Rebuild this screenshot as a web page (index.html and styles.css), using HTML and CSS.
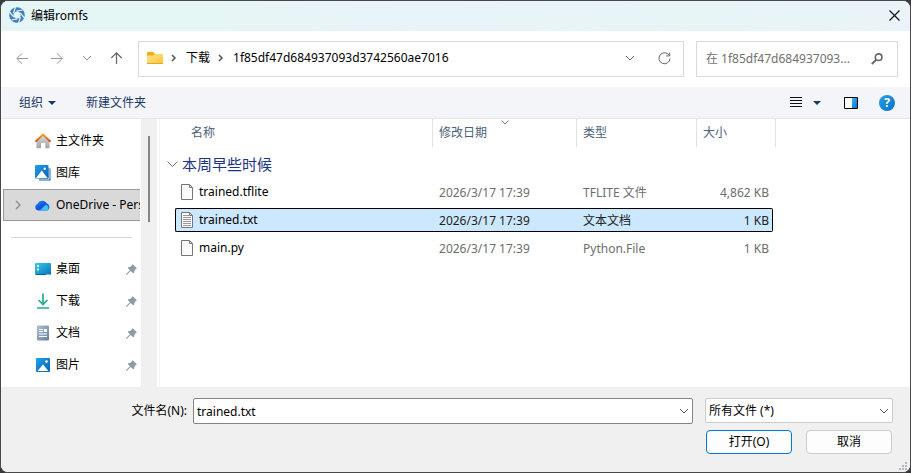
FILE: index.html
```html
<!DOCTYPE html>
<html lang="zh-CN">
<head>
<meta charset="utf-8">
<title>编辑romfs</title>
<link rel="stylesheet" href="styles.css">
</head>
<body>
<svg class="defs" width="0" height="0" aria-hidden="true">
  <defs>
    <linearGradient id="folder" x1="0" y1="0" x2="1" y2="1"><stop offset="0" stop-color="#ffe48f"/><stop offset="1" stop-color="#fcc53a"/></linearGradient>
    <linearGradient id="blue" x1="0" y1="0" x2="1" y2="1"><stop offset="0" stop-color="#1fa0e8"/><stop offset="1" stop-color="#0a62b8"/></linearGradient>
    <linearGradient id="pane" x1="0" y1="0" x2="1" y2="1"><stop offset="0" stop-color="#35b4f2"/><stop offset="1" stop-color="#0a78d0"/></linearGradient>
    <linearGradient id="desk" x1="0" y1="0" x2="1" y2="1"><stop offset="0" stop-color="#2fd0de"/><stop offset="1" stop-color="#0a6fc6"/></linearGradient>
    <linearGradient id="cloud" x1="0" y1="0" x2="1" y2="1"><stop offset="0" stop-color="#1aa0f4"/><stop offset=".5" stop-color="#1450dc"/><stop offset="1" stop-color="#1a78ee"/></linearGradient>
    <linearGradient id="house" x1="0" y1="0" x2="0" y2="1"><stop offset="0" stop-color="#dedede"/><stop offset="1" stop-color="#a2a2a2"/></linearGradient>
    <linearGradient id="roof" x1="0" y1="0" x2="0" y2="1"><stop offset="0" stop-color="#f5a21c"/><stop offset="1" stop-color="#d9502a"/></linearGradient>
    <linearGradient id="green" x1="0" y1="0" x2="0" y2="1"><stop offset="0" stop-color="#35c98e"/><stop offset="1" stop-color="#0f9a92"/></linearGradient>
    <linearGradient id="doc" x1="0" y1="0" x2="1" y2="1"><stop offset="0" stop-color="#adc0d6"/><stop offset="1" stop-color="#647f9f"/></linearGradient>
    <symbol id="chev-down" viewBox="0 0 10 6"><path d="M1 1l4 4 4-4" fill="none" stroke="currentColor"/></symbol>
    <symbol id="chev-right" viewBox="0 0 6 8"><path d="M1 1l3 3-3 3" fill="none" stroke="currentColor" stroke-width="1.5"/></symbol>
    <symbol id="pin" viewBox="0 0 11 11"><path d="M6.5 0L11 4.5 9.8 5 8.4 6.6 8.2 8.6 7.2 9.3 4.6 6.9 1 10.8 0 11 .2 10 3.9 6.2 1.8 3.9 2.5 2.9 4.5 2.7 6.1 1.2z" fill="#8f999f"/></symbol>
    <symbol id="page" viewBox="0 0 13 16"><path d="M.5.5h8l3 3v12H.5z" fill="#fbfbfb" stroke="#767676"/><path d="M8.5.5v3h3" fill="none" stroke="#767676"/></symbol>
  </defs>
</svg>
<main class="window">
  <header class="titlebar">
    <svg class="app-icon" width="16" height="16" viewBox="0 0 16 16"><circle cx="8" cy="8" r="5.7" fill="none" stroke="#3b7fc4" stroke-width="4.2"/><g stroke="#e6f5f6" stroke-width="1.200"><path d="M4.500 6L6.500 0M7.500 4.200L13.500 3M11.200 5.800L15.500 11M11.500 10L9.500 16M8.500 11.800L2.500 13M4.800 10.200L.500 5"/></g></svg>
    <h1 class="title">编辑romfs</h1>
    <button class="icon-btn close" aria-label="关闭"><svg width="11" height="11" viewBox="0 0 11 11"><path d="M.5.5l10 10M10.5.5l-10 10" stroke="#111" stroke-width="1.2"/></svg></button>
  </header>
  <nav class="navbar">
    <div class="nav-buttons">
      <button class="icon-btn faded" aria-label="后退"><svg width="12" height="12" viewBox="0 0 12 12"><path d="M12 6.500H1M6 1.300L.8 6.500 6 11.700" fill="none" stroke="currentColor"/></svg></button>
      <button class="icon-btn faded" aria-label="前进"><svg width="12" height="12" viewBox="0 0 12 12"><path d="M0 6.500h11M6 1.300l5.200 5.200L6 11.700" fill="none" stroke="currentColor"/></svg></button>
      <button class="icon-btn faded small" aria-label="最近浏览的位置"><svg width="10" height="6"><use href="#chev-down"/></svg></button>
      <button class="icon-btn" aria-label="上移"><svg width="12" height="12" viewBox="0 0 12 12"><path d="M5.500 12V1M.3 6L5.500.8 10.700 6" fill="none" stroke="currentColor" stroke-width="1.2"/></svg></button>
    </div>
    <div class="address">
      <svg width="16" height="14" viewBox="0 0 16 14"><path d="M0 2a1 1 0 0 1 1-1h5l2 2h7a1 1 0 0 1 1 1v4H0z" fill="#f5ac0f"/><path d="M0 4.5h6.2L8 3h7.2a.8.8 0 0 1 .8.8V12a1 1 0 0 1-1 1H1a1 1 0 0 1-1-1z" fill="url(#folder)"/><path d="M0 12.5h16" stroke="#e9a51c"/></svg>
      <svg class="crumb-sep" width="6" height="8"><use href="#chev-right"/></svg>
      <a href="#" class="crumb">下载</a>
      <svg class="crumb-sep" width="6" height="8"><use href="#chev-right"/></svg>
      <a href="#" class="crumb">1f85df47d684937093d3742560ae7016</a>
      <button class="icon-btn history" aria-label="以前的位置"><svg width="10" height="6"><use href="#chev-down"/></svg></button>
      <button class="icon-btn refresh" aria-label="刷新"><svg width="13" height="13" viewBox="0 0 13 13"><path d="M11.2 3.4A5.5 5.5 0 1 0 12 6.5M11.7.5v3.4H8.2" fill="none" stroke="currentColor"/></svg></button>
    </div>
    <div class="search">
      <input type="text" aria-label="搜索" placeholder="在 1f85df47d684937093...">
      <svg width="12" height="12" viewBox="0 0 12 12"><circle cx="7.6" cy="4.2" r="3.3" fill="none" stroke="#666" stroke-width="1.6"/><path d="M5.3 6.6L.8 11" stroke="#666" stroke-width="2"/></svg>
    </div>
  </nav>
  <div class="commandbar">
    <button class="command">组织<svg width="8" height="4" viewBox="0 0 8 4"><path d="M0 0h8L4 4z" fill="currentColor"/></svg></button>
    <button class="command">新建文件夹</button>
    <div class="view-tools">
      <button class="icon-btn" aria-label="更改视图"><svg width="12" height="11" viewBox="0 0 12 11"><path d="M0 .5h12M0 3.5h12M0 6.5h12M0 9.5h12" stroke="#111"/></svg></button>
      <button class="icon-btn view-arrow" aria-label="更多选项"><svg width="8" height="4" viewBox="0 0 8 4"><path d="M0 0h8L4 4z" fill="#1c3768"/></svg></button>
      <button class="icon-btn preview" aria-label="显示预览窗格"><svg width="14" height="12" viewBox="0 0 14 12"><path d="M.5.5h13v11H.5z" fill="#fff" stroke="#000"/><path d="M8 1h5v10H8z" fill="url(#pane)"/></svg></button>
      <button class="help" aria-label="帮助">?</button>
    </div>
  </div>
  <div class="content">
    <nav class="sidebar">
      <ul class="places">
        <li><a class="place" href="#"><svg width="16" height="16" viewBox="0 0 16 16"><path d="M1.5 7L8 1.5 14.500 7v8.200h-4.200V10H6v5.200H1.500z" fill="url(#house)"/><path d="M1 8.200L8 1.500l7 6.700" fill="none" stroke="url(#roof)" stroke-width="1.900" stroke-linecap="round"/></svg>主文件夹</a></li>
        <li><a class="place" href="#"><svg width="16" height="16" viewBox="0 0 16 16"><path d="M4 3h10.500a1 1 0 0 1 1 1v11.500H4z" fill="#1766ad"/><path d="M14 1v13H2" fill="none" stroke="#fff"/><rect width="13.500" height="13.500" rx="1" fill="url(#blue)"/><path d="M1 13l5.800-7.500L12.500 13z" fill="#fff"/><circle cx="9.700" cy="3.800" r="1.200" fill="#fff"/></svg>图库</a></li>
        <li><a class="place selected" href="#"><svg class="expander" width="6" height="10" viewBox="0 0 6 10"><path d="M1 1l4 4-4 4" fill="none" stroke="#888" stroke-width="1.300"/></svg><svg width="16" height="11" viewBox="0 0 16 11"><path d="M3.500 10.500A3.500 3.500 0 0 1 2.600 3.700 5 5 0 0 1 11.500 3.200 4 4 0 0 1 12.500 10.500z" fill="url(#cloud)"/><path d="M5 10.500l5.600-5.700A3.500 3.500 0 0 1 12.500 10.500z" fill="#42c0f7"/></svg>OneDrive - Personal</a></li>
      </ul>
      <hr class="divider">
      <ul class="places">
        <li><a class="place" href="#"><svg width="16" height="12" viewBox="0 0 16 12"><rect width="16" height="12" rx="1" fill="url(#desk)"/><path d="M2 2h2v2H2zM2 5.500h2v2H2z" fill="#fff"/><path d="M1 11.500h10" stroke="#0b5c99"/><path d="M11.500 11.500h3" stroke="#fff" stroke-dasharray="1 1"/></svg>桌面<svg class="pin" width="11" height="11"><use href="#pin"/></svg></a></li>
        <li><a class="place" href="#"><svg width="16" height="16" viewBox="0 0 16 16"><path d="M8 .500v10.500M3.500 7L8 11.500 12.500 7M2 15h12" fill="none" stroke="#1fae8e" stroke-width="1.700"/></svg>下载<svg class="pin" width="11" height="11"><use href="#pin"/></svg></a></li>
        <li><a class="place" href="#"><svg width="16" height="16" viewBox="0 0 16 16"><rect x="2" y=".500" width="12" height="15" rx="1" fill="url(#doc)"/><path d="M4 4.500h4M4 6.500h4M4 9h8M4 11.500h8" stroke="#fff" stroke-width="1"/><path d="M9 4h3v3H9z" fill="#fff"/></svg>文档<svg class="pin" width="11" height="11"><use href="#pin"/></svg></a></li>
        <li><a class="place" href="#"><svg width="16" height="16" viewBox="0 0 16 16"><rect x="1" y="1" width="14" height="14" rx="1" fill="url(#blue)"/><path d="M2.500 14L8 7.500l5.500 6.500z" fill="#fff"/><circle cx="11.500" cy="4.500" r="1.300" fill="#fff"/></svg>图片<svg class="pin" width="11" height="11"><use href="#pin"/></svg></a></li>
      </ul>
    </nav>
    <div class="scrollbar"><div class="thumb"></div></div>
    <section class="files">
      <table>
        <colgroup><col class="c-gutter"><col class="c-name"><col class="c-date"><col class="c-type"><col class="c-size"><col class="c-end"></colgroup>
        <thead><tr><th colspan="2" class="h-name">名称</th><th class="sorted">修改日期<svg class="sort" width="8" height="5" viewBox="0 0 8 5"><path d="M.500.500L4 4 7.500.500" fill="none" stroke="#777"/></svg></th><th>类型</th><th colspan="2">大小</th></tr></thead>
        <tbody>
          <tr class="group"><td colspan="6"><button class="group-btn"><svg width="11" height="6" viewBox="0 0 11 6"><path d="M.500.500l5 5 5-5" fill="none" stroke="#777"/></svg>本周早些时候</button></td></tr>
          <tr class="file"><td></td><td><div class="cell name"><svg width="13" height="16"><use href="#page"/></svg>trained.tflite</div></td><td><div class="cell">2026/3/17 17:39</div></td><td><div class="cell">TFLITE 文件</div></td><td><div class="cell size">4,862 KB</div></td></tr>
          <tr class="file active"><td></td><td><div class="cell name"><svg width="13" height="16" viewBox="0 0 13 16"><use href="#page"/><path d="M2 3.500h6M2 5.500h8M2 7.500h8M2 9.500h8M2 11.500h8M2 13.500h8" stroke="#999"/></svg>trained.txt</div></td><td><div class="cell">2026/3/17 17:39</div></td><td><div class="cell">文本文档</div></td><td><div class="cell size">1 KB</div></td></tr>
          <tr class="file"><td></td><td><div class="cell name"><svg width="13" height="16"><use href="#page"/></svg>main.py</div></td><td><div class="cell">2026/3/17 17:39</div></td><td><div class="cell">Python.File</div></td><td><div class="cell size">1 KB</div></td></tr>
        </tbody>
      </table>
    </section>
  </div>
  <footer class="footer">
    <div class="form-row">
      <label for="filename">文件名(N):</label>
      <div class="field filename"><input id="filename" type="text" value="trained.txt"><svg width="10" height="6"><use href="#chev-down"/></svg></div>
      <div class="field filetype"><select aria-label="文件类型"><option>所有文件 (*)</option></select><svg width="10" height="6"><use href="#chev-down"/></svg></div>
    </div>
    <div class="actions"><button class="btn primary">打开(O)</button><button class="btn">取消</button></div>
    <svg class="grip" width="9" height="9" viewBox="0 0 9 9"><path d="M6 0h2v2H6zM3 3h2v2H3zM6 3h2v2H6zM0 6h2v2H0zM3 6h2v2H3zM6 6h2v2H6z" fill="#b8b8b8"/></svg>
  </footer>
</main>
</body>
</html>
```
FILE: styles.css
```css
* { box-sizing: border-box; }
html, body { height: 100%; }
body {
  margin: 0;
  background: #39393b;
  font: 12px/16px "Noto Sans", "Noto Sans CJK SC", sans-serif;
  color: #000;
}
button, input, select { font: inherit; color: inherit; margin: 0; padding: 0; }
button { background: none; border: 0; }
a { color: inherit; text-decoration: none; }
svg { flex: none; display: block; }
ul { list-style: none; margin: 0; padding: 0; }
.defs { position: absolute; }

.window {
  display: flex;
  flex-direction: column;
  min-height: 100vh;
  border: 1px solid #48484a;
  border-radius: 8px;
  overflow: hidden;
  background: #fff;
}

.titlebar {
  display: flex;
  align-items: center;
  height: 30px;
  padding: 0 10px 2px 8px;
  gap: 6px;
  background: linear-gradient(100deg, #e6f5f6 0 25%, #e9f3fa 45%, #e7f5f7 75%, #eaf3f9);
}
.title { margin: 0; padding-top: 2px; font-size: 12px; font-weight: 400; }
.icon-btn { display: flex; align-items: center; justify-content: center; color: #666; }
.close { margin-left: auto; }

.navbar { display: flex; align-items: center; height: 56px; padding: 0 12px 0 15px; }
.nav-buttons { display: flex; align-items: center; gap: 23px; margin-right: 15px; padding-bottom: 2px; }
.nav-buttons .small { margin: 0 -4px 0 -4px; }
.faded { color: #999; }
.address, .search { display: flex; align-items: center; height: 36px; border: 1px solid #d9d9d9; background: #fff; }
.address { flex: 1; min-width: 0; padding: 0 12px 2px 8px; }
.address .crumb-sep { margin: 0 9px 0 8px; color: #555; }
.crumb + .crumb-sep { margin-right: 9px; }
.history { margin-left: auto; }
.refresh { margin-left: 23px; }
.search { width: 202px; margin-left: 12px; padding: 0 14px 0 9px; }
.search input { flex: 1; min-width: 0; border: 0; outline: 0; background: none; }
.search input::placeholder { color: #707070; opacity: 1; }

.commandbar {
  display: flex;
  align-items: center;
  height: 32px;
  padding: 0 15px 0 18px;
  gap: 30px;
  background: #f4f5f8;
  border-bottom: 1px solid #e6e6e8;
  color: #1c3768;
}
.command { display: flex; align-items: center; gap: 5px; }
.view-tools { display: flex; align-items: center; margin-left: auto; }
.view-arrow { margin-left: 11px; }
.preview { margin-left: 23px; }
.help {
  width: 16px;
  height: 16px;
  margin-left: 21px;
  border-radius: 50%;
  background: linear-gradient(135deg, #2a9fe8, #0670cc);
  color: #fff;
  font-weight: 700;
  text-align: center;
}

.content { display: flex; flex: 1; }
.sidebar { width: 140px; padding: 6px 1px 0 0; }
.places { overflow: hidden; }
.place {
  display: flex;
  align-items: center;
  height: 32px;
  gap: 5px;
  margin-left: 2px;
  padding: 0 3px 0 32px;
  white-space: nowrap;
}
.place.selected { width: 180px; padding-left: 11px; border: 1px solid #999; background: #d9d9d9; }
.expander { margin-right: 9px; }
.pin { margin-left: auto; }
.divider { height: 1px; margin: 16px 8px 15px 10px; border: 0; background: #d4d4d4; }
.scrollbar { width: 16px; padding: 17px 7px 0; background: #f0f0f0; }
.thumb { width: 2px; height: 86px; background: #858585; }
.files { flex: 1; margin-left: 2px; border-left: 1px solid #f3f3f3; }

table { table-layout: fixed; width: 616px; border-collapse: separate; border-spacing: 0; }
.c-gutter { width: 15px; }
.c-name { width: 258px; }
.c-date { width: 144px; }
.c-type { width: 120px; }
.c-size { width: 76px; }
.c-end { width: 3px; }
th, td { padding: 0; }
th {
  height: 28px;
  padding-left: 6px;
  border-right: 1px solid #e2e2e2;
  color: #4c607a;
  font-weight: 400;
  text-align: left;
}
.h-name { padding-left: 31px; }
.sorted { position: relative; }
.sort { position: absolute; top: 1px; left: 50%; margin-left: -4px; }
.group td { height: 31px; padding-top: 2px; }
.group-btn { display: flex; align-items: center; gap: 4px; padding: 0 7px; color: #1e3287; font-size: 15px; line-height: 20px; }
.file td { height: 28px; color: #6d6d6d; }
.cell { display: flex; align-items: center; height: 24px; padding: 2px 6px 0; white-space: nowrap; }
.cell.name { gap: 5px; padding: 0 6px; color: #000; }
.cell.size { justify-content: flex-end; padding: 2px 4px 0; }
.active .cell { border: solid #000; border-width: 1px 0; background: #cce8ff; color: #222; }
.active .cell.name { border-left-width: 1px; border-radius: 2px 0 0 2px; padding-left: 5px; color: #000; }
.active .cell.size { border-right-width: 1px; border-radius: 0 2px 2px 0; padding-right: 3px; }

.footer { position: relative; height: 85px; padding: 11px 17px 0; background: #f0f0f0; }
.form-row { display: flex; align-items: flex-start; }
.form-row label { flex: none; width: 175px; padding: 5px 6px 0 0; text-align: right; }
.field { display: flex; align-items: center; background: #fff; color: #555; }
.field input, .field select { flex: 1; min-width: 0; height: 24px; border: 0; outline: 0; background: none; appearance: none; color: #000; }
.field select { margin-right: -20px; padding-right: 20px; }
.field svg { margin: 0 3px 0 4px; }
.filename { flex: 1; height: 26px; padding-left: 3px; border: 1px solid #858585; border-radius: 2px; }
.filetype { width: 188px; height: 25px; margin-left: 12px; padding-left: 3px; border: 1px solid #ccc; border-radius: 2px; }
.actions { display: flex; justify-content: flex-end; gap: 14px; margin-top: 6px; padding-right: 1px; }
.btn { width: 86px; height: 24px; border: 1px solid #ccc; border-radius: 4px; background: #fdfdfd; }
.btn.primary { border-color: #0078d4; }
.grip { position: absolute; right: 2px; bottom: 1px; }
```
